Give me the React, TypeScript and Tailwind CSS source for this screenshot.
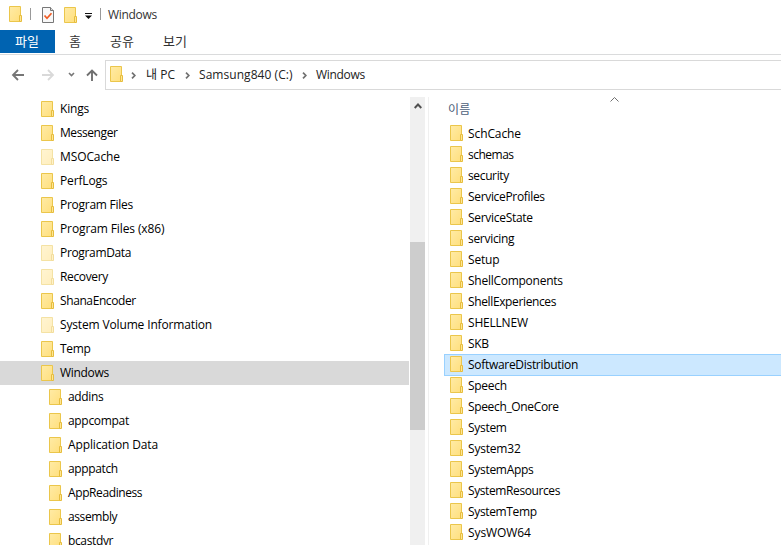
import React from "react";

type FolderItem = { name: string; tracking: string; faded?: boolean; nested?: boolean; selected?: boolean };

const tree: FolderItem[] = [
  { name: "Kings", tracking: "tracking-[-0.2px]" },
  { name: "Messenger", tracking: "tracking-[-0.42px]" },
  { name: "MSOCache", tracking: "tracking-[-0.1px]", faded: true },
  { name: "PerfLogs", tracking: "tracking-[-0.15px]" },
  { name: "Program Files", tracking: "tracking-[-0.26px]" },
  { name: "Program Files (x86)", tracking: "tracking-[-0.11px]" },
  { name: "ProgramData", tracking: "tracking-[-0.34px]", faded: true },
  { name: "Recovery", tracking: "tracking-[-0.36px]", faded: true },
  { name: "ShanaEncoder", tracking: "tracking-[-0.4px]" },
  { name: "System Volume Information", tracking: "tracking-[-0.15px]", faded: true },
  { name: "Temp", tracking: "tracking-[-0.3px]" },
  { name: "Windows", tracking: "tracking-[-0.3px]", selected: true },
  { name: "addins", tracking: "tracking-[-0.36px]", nested: true },
  { name: "appcompat", tracking: "tracking-[-0.32px]", nested: true },
  { name: "Application Data", tracking: "tracking-[-0.13px]", nested: true },
  { name: "apppatch", tracking: "tracking-[-0.36px]", nested: true },
  { name: "AppReadiness", tracking: "tracking-[-0.4px]", nested: true },
  { name: "assembly", tracking: "tracking-[-0.4px]", nested: true },
  { name: "bcastdvr", tracking: "tracking-[-0.36px]", nested: true },
];

const files: FolderItem[] = [
  { name: "SchCache", tracking: "tracking-[-0.1px]" },
  { name: "schemas", tracking: "tracking-[-0.5px]" },
  { name: "security", tracking: "tracking-[-0.36px]" },
  { name: "ServiceProfiles", tracking: "tracking-[-0.33px]" },
  { name: "ServiceState", tracking: "tracking-[-0.3px]" },
  { name: "servicing", tracking: "tracking-[-0.3px]" },
  { name: "Setup", tracking: "tracking-[-0.2px]" },
  { name: "ShellComponents", tracking: "tracking-[-0.26px]" },
  { name: "ShellExperiences", tracking: "tracking-[-0.37px]" },
  { name: "SHELLNEW", tracking: "tracking-[-0.2px]" },
  { name: "SKB", tracking: "tracking-[-0.3px]" },
  { name: "SoftwareDistribution", tracking: "tracking-[-0.3px]", selected: true },
  { name: "Speech", tracking: "tracking-[-0.3px]" },
  { name: "Speech_OneCore", tracking: "tracking-[-0.35px]" },
  { name: "System", tracking: "tracking-[-0.3px]" },
  { name: "System32", tracking: "tracking-[-0.2px]" },
  { name: "SystemApps", tracking: "tracking-[-0.3px]" },
  { name: "SystemResources", tracking: "tracking-[-0.4px]" },
  { name: "SystemTemp", tracking: "tracking-[-0.35px]" },
  { name: "SysWOW64", tracking: "tracking-[-0.1px]" },
];

function Folder({ faded = false }: { faded?: boolean }) {
  return (
    <svg width="13" height="16" viewBox="0 0 13 16" className={faded ? "shrink-0 opacity-50" : "shrink-0"}>
      <defs>
        <linearGradient id="folder" x1="0" y1="0" x2="1" y2="1">
          <stop offset="0" stopColor="#ffeba6" />
          <stop offset="1" stopColor="#ffdf7d" />
        </linearGradient>
      </defs>
      <path d="M.5.5h11v15H.5z" fill="url(#folder)" stroke="#ebc64b" />
      <path d="M10.5 15.5v-6h2v6z" fill="#ffe694" stroke="#e6bd3e" />
    </svg>
  );
}

function Crumb() {
  return (
    <svg width="5" height="7" viewBox="0 0 5 7" className="shrink-0">
      <path d="M1 .7 3.8 3.5 1 6.3" fill="none" stroke="#707070" strokeWidth="1.7" />
    </svg>
  );
}

export default function App() {
  return (
    <div className="flex h-[545px] w-[781px] flex-col overflow-hidden bg-white font-['Open_Sans','Noto_Sans_CJK_KR',sans-serif] text-[12px] leading-4 whitespace-pre text-black">
      <header className="flex h-[30px] shrink-0 items-start pt-[6px] pl-[9px]">
        <Folder />
        <i className="mt-[2px] ml-2 h-3 w-px bg-[#999]" />
        <svg width="12" height="16" viewBox="0 0 12 16" className="mt-px ml-[11px]">
          <path d="M.5.5h8l3 3v12H.5z" fill="#f8f8f8" stroke="#777" />
          <path d="M8.5.5v3h3" fill="#ddd" stroke="#777" />
          <path d="m2.5 8.5 2.5 2.8 4.5-5" fill="none" stroke="#f05a22" strokeWidth="1.7" />
        </svg>
        <div className="mt-px ml-[10px]"><Folder /></div>
        <svg width="7" height="6" viewBox="0 0 7 6" className="mt-[7px] ml-2">
          <path d="M0 0h7v1H0zM0 2.5h7L3.5 6z" fill="#111" />
        </svg>
        <i className="mt-[2px] ml-2 h-3 w-px bg-[#999]" />
        <span className="mt-px ml-[7px] tracking-[-0.3px] text-[#333]">Windows</span>
      </header>
      <nav className="flex h-[25px] shrink-0 items-start border-b border-[#dadbdc] text-[#333]">
        <div className="h-[23px] w-[55px] bg-[#0063b1] pt-[3px] pl-[15px] text-[13px] text-white">파일</div>
        <span className="mt-[3px] ml-[14px] w-[12px] text-[13px]">홈</span>
        <span className="mt-[3px] ml-[29px] w-[24px] text-[13px]">공유</span>
        <span className="mt-[3px] ml-[29px] w-[24px] text-[13px]">보기</span>
      </nav>
      <div className="flex h-[42px] shrink-0 items-start pt-[5px]">
        <svg width="105" height="30" viewBox="0 0 105 30" fill="none" className="shrink-0">
          <path d="M24 15H13m5-5-5 5 5 5" stroke="#767676" strokeWidth="1.8" />
          <path d="M42 15h11m-5-5 5 5-5 5" stroke="#d9d9d9" strokeWidth="1.8" />
          <path d="m69 13 2.5 2.5L74 13" stroke="#777" strokeWidth="1.6" />
          <path d="M92 21V10.5m-5 5 5-5 5 5" stroke="#707070" strokeWidth="1.9" />
        </svg>
        <div className="flex h-[30px] flex-1 items-center border border-r-0 border-[#d9d9d9] pl-1 text-[#222]">
          <div className="-mt-[2px] flex"><Folder /></div>
          <div className="ml-2 flex"><Crumb /></div>
          <span className="ml-[10px] w-[31px]">내 PC</span>
          <div className="ml-[8px] flex"><Crumb /></div>
          <span className="ml-[9px] w-[95px] tracking-[0.05px]">Samsung840 (C:)</span>
          <div className="ml-[8px] flex"><Crumb /></div>
          <span className="ml-[9px] tracking-[-0.3px]">Windows</span>
        </div>
      </div>
      <main className="flex min-h-0 flex-1">
        <section className="w-[409px] shrink-0 overflow-hidden">
          {tree.map((f) => (
            <div key={f.name} className={`flex h-6 items-center ${f.nested ? "pl-[49px]" : "pl-[41px]"} ${f.selected ? "bg-[#d9d9d9]" : ""}`}>
              <Folder faded={f.faded} />
              <span className={`ml-[6px] ${f.tracking}`}>{f.name}</span>
            </div>
          ))}
        </section>
        <div className="ml-px flex w-[15px] shrink-0 flex-col items-center bg-[#f0f0f0]">
          <svg width="8" height="6" viewBox="0 0 8 6" className="mt-[6px]">
            <path d="m.7 5 3.3-3.5L7.3 5" fill="none" stroke="#505050" strokeWidth="1.9" />
          </svg>
          <div className="mt-[133px] h-[188px] w-full bg-[#cdcdcd]" />
        </div>
        <section className="ml-[3px] flex-1 overflow-hidden border-l border-[#f0f0f0] pl-[15px]">
          <div className="flex h-[26px] items-start pl-1 text-[#4c607a]">
            <span className="mt-[5px] w-[23px] tracking-[0.3px]">이름</span>
            <svg width="9" height="5" viewBox="0 0 9 5" className="ml-[139px]">
              <path d="m.5 4.5 4-4 4 4" fill="none" stroke="#707070" />
            </svg>
          </div>
          {files.map((f) => (
            <div key={f.name} className={`flex h-[21px] items-center ${f.selected ? "-mb-px h-[22px] border border-r-0 border-[#99d1ff] bg-[#cce8ff] pl-[5px]" : "pl-[6px]"}`}>
              <div className={f.selected ? "mt-px self-start" : "mt-[2px] self-start"}><Folder /></div>
              <span className={`ml-[5px] ${f.tracking}`}>{f.name}</span>
            </div>
          ))}
        </section>
      </main>
    </div>
  );
}
